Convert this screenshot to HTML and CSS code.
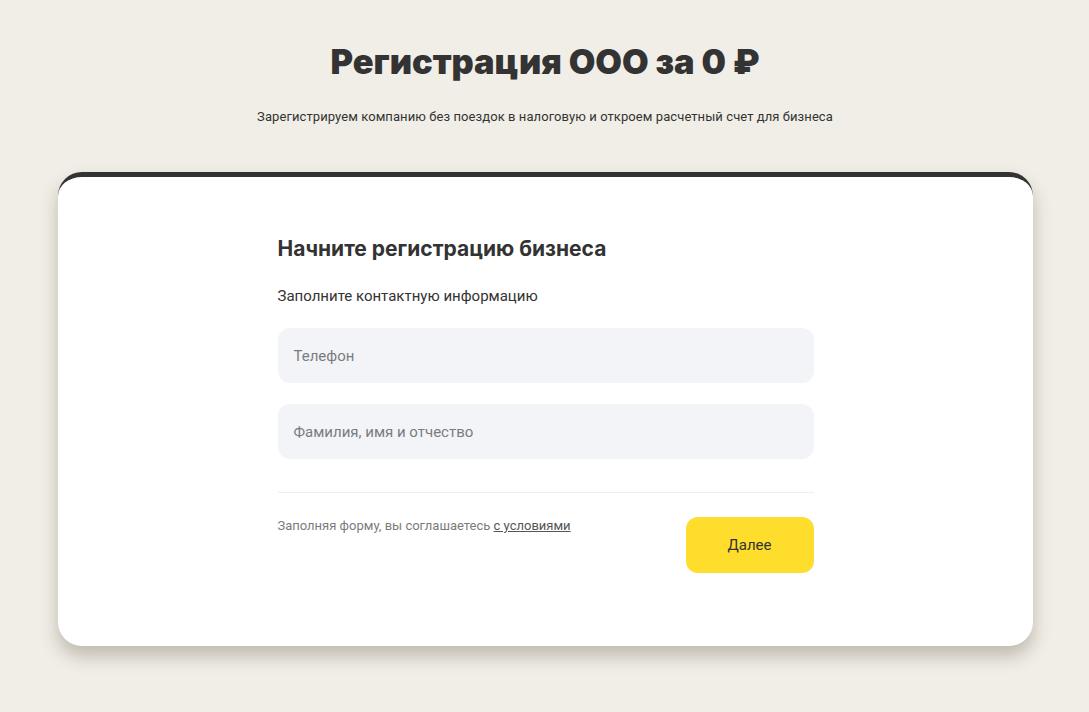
FILE: index.html
```html
<!DOCTYPE html>
<html lang="ru">
<head>
<meta charset="utf-8">
<title>Регистрация ООО</title>
<link rel="stylesheet" href="styles.css">
</head>
<body>
<main class="page">
  <header class="hero">
    <h1 class="hero-title">Регистрация ООО за 0 ₽</h1>
    <p class="hero-sub">Зарегистрируем компанию без поездок в налоговую и откроем расчетный счет для бизнеса</p>
  </header>
  <section class="card">
    <form class="form">
      <h2 class="form-title">Начните регистрацию бизнеса</h2>
      <p class="form-sub">Заполните контактную информацию</p>
      <div class="field"><span class="placeholder">Телефон</span></div>
      <div class="field"><span class="placeholder">Фамилия, имя и отчество</span></div>
      <div class="divider"></div>
      <div class="form-footer">
        <p class="terms">Заполняя форму, вы соглашаетесь <a class="terms-link" href="#">с условиями</a></p>
        <button class="btn" type="button">Далее</button>
      </div>
    </form>
  </section>
</main>
</body>
</html>
```
FILE: styles.css
```css
* { box-sizing: border-box; }
html, body { margin: 0; padding: 0; }
body {
  background: #f1eee7;
  color: #333333;
  font-family: Roboto, "Liberation Sans", sans-serif;
  width: 1089px;
  height: 712px;
  overflow: hidden;
}
.page {
  padding-top: 40px;
  padding-left: 1px;
  display: flex;
  flex-direction: column;
  align-items: center;
}
.hero { text-align: center; }
.hero-title {
  margin: 0;
  font-family: Inter, Roboto, sans-serif;
  font-weight: 900;
  font-size: 34.4px;
  line-height: 44px;
  letter-spacing: 0;
  color: #333333;
}
.hero-sub {
  margin: 24px 0 0;
  font-size: 13px;
  line-height: 18px;
  letter-spacing: 0.08px;
  color: #333333;
}
.card {
  margin-top: 46px;
  width: 975px;
  background: #ffffff;
  border-top: 5px solid #333333;
  border-radius: 24px;
  box-shadow: 0 10px 18px rgba(60, 50, 30, 0.28);
  padding: 56px 0 73px;
  display: flex;
  justify-content: center;
}
.form { width: 536px; margin-left: 1px; }
.form-title {
  margin: 0;
  font-family: Inter, Roboto, sans-serif;
  font-size: 21px;
  line-height: 32px;
  font-weight: 700;
  color: #333333;
}
.form-sub {
  margin: 20px 0 0;
  font-size: 15px;
  line-height: 22px;
}
.field {
  height: 55px;
  border-radius: 12px;
  background: #f3f4f7;
  display: flex;
  align-items: center;
  padding: 0 16px;
}
.form-sub + .field { margin-top: 21px; }
.field + .field { margin-top: 21px; }
.placeholder {
  font-size: 15px;
  color: #7a7c80;
}
.divider {
  margin-top: 33px;
  height: 1px;
  background: #eceef1;
}
.form-footer {
  margin-top: 24px;
  display: flex;
  justify-content: space-between;
  align-items: flex-start;
}
.terms {
  margin: 0;
  font-size: 13px;
  line-height: 18px;
  color: #7b7b7b;
}
.terms-link { color: #555555; text-decoration: underline; }
.btn {
  width: 128px;
  height: 56px;
  border: none;
  border-radius: 12px;
  background: #ffdd2d;
  color: #333333;
  font-family: Roboto, "Liberation Sans", sans-serif;
  font-size: 15px;
  cursor: pointer;
}
```
